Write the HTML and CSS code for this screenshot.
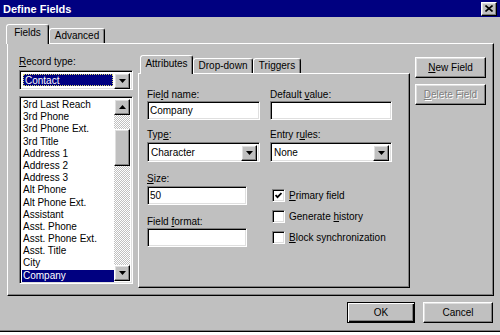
FILE: index.html
```html
<!DOCTYPE html>
<html lang="en">
<head>
  <meta charset="UTF-8">
  <title>Define Fields</title>
  <link rel="stylesheet" href="styles.css">
</head>
<body>

  <div class="window">
    <div class="titlebar">
      <span class="title">Define Fields</span>
      <button class="close raised">
        <svg width="8" height="7" viewBox="0 0 8 7"><path d="M0.5 0.5 L7.5 6.5 M7.5 0.5 L0.5 6.5" stroke="#000" stroke-width="1.6" fill="none"/></svg>
      </button>
    </div>

    <div class="body">
      <div class="tabs outer-tabs">
        <div class="tab active" style="width:43px">Fields</div>
        <div class="tab" style="width:56px">Advanced</div>
      </div>

      <div class="panel outer-panel">
        <!-- record type + field list -->
        <div class="record-col">
          <div class="label"><u>R</u>ecord type:</div>
          <div class="combo sunken">
            <div class="combo-text"><span class="sel">Contact</span></div>
            <span class="drop-btn raised">
              <svg width="7" height="4" viewBox="0 0 7 4"><polygon points="0,0 7,0 3.5,4" fill="#000"/></svg>
            </span>
          </div>
          <div class="listbox sunken">
            <ul class="items">
              <li>3rd Last Reach</li>
              <li>3rd Phone</li>
              <li>3rd Phone Ext.</li>
              <li>3rd Title</li>
              <li>Address 1</li>
              <li>Address 2</li>
              <li>Address 3</li>
              <li>Alt Phone</li>
              <li>Alt Phone Ext.</li>
              <li>Assistant</li>
              <li>Asst. Phone</li>
              <li>Asst. Phone Ext.</li>
              <li>Asst. Title</li>
              <li>City</li>
              <li class="selected">Company</li>
            </ul>
            <div class="scrollbar">
              <span class="sb-btn raised">
                <svg width="7" height="4" viewBox="0 0 7 4"><polygon points="0,4 7,4 3.5,0" fill="#000"/></svg>
              </span>
              <div class="sb-track"><div class="sb-thumb raised"></div></div>
              <span class="sb-btn raised">
                <svg width="7" height="4" viewBox="0 0 7 4"><polygon points="0,0 7,0 3.5,4" fill="#000"/></svg>
              </span>
            </div>
          </div>
        </div>

        <!-- attributes tab control -->
        <div class="inner-tabctl">
          <div class="tabs inner-tabs">
            <div class="tab active" style="width:53px">Attributes</div>
            <div class="tab" style="width:60px">Drop-down</div>
            <div class="tab" style="width:48px">Triggers</div>
          </div>
          <div class="panel inner-panel">
            <div class="col col-left">
              <div class="label">Fie<u>l</u>d name:</div>
              <div class="field sunken">Company</div>
              <div class="label gap">Typ<u>e</u>:</div>
              <div class="select sunken">
                <span class="select-text">Character</span>
                <span class="drop-btn raised">
                  <svg width="7" height="4" viewBox="0 0 7 4"><polygon points="0,0 7,0 3.5,4" fill="#000"/></svg>
                </span>
              </div>
              <div class="label gap2"><u>S</u>ize:</div>
              <div class="field short sunken">50</div>
              <div class="label gap2">Field <u>f</u>ormat:</div>
              <div class="field short sunken"></div>
            </div>
            <div class="col col-right">
              <div class="label">Default <u>v</u>alue:</div>
              <div class="field sunken"></div>
              <div class="label gap">Entry r<u>u</u>les:</div>
              <div class="select sunken">
                <span class="select-text">None</span>
                <span class="drop-btn raised">
                  <svg width="7" height="4" viewBox="0 0 7 4"><polygon points="0,0 7,0 3.5,4" fill="#000"/></svg>
                </span>
              </div>
              <div class="checks">
                <div class="check">
                  <span class="box sunken">
                    <svg width="7" height="7" viewBox="0 0 7 7"><polyline points="0.5,3 2.5,5.2 6.5,1" stroke="#000" stroke-width="1.8" fill="none"/></svg>
                  </span>
                  <span><u>P</u>rimary field</span>
                </div>
                <div class="check">
                  <span class="box sunken"></span>
                  <span>Generate <u>h</u>istory</span>
                </div>
                <div class="check">
                  <span class="box sunken"></span>
                  <span><u>B</u>lock synchronization</span>
                </div>
              </div>
            </div>
          </div>
        </div>

        <div class="side-buttons">
          <button class="btn raised"><u>N</u>ew Field</button>
          <button class="btn raised disabled"><u>D</u>elete Field</button>
        </div>
      </div>

      <div class="footer">
        <button class="btn default ok">OK</button>
        <button class="btn raised cancel">Cancel</button>
      </div>
    </div>
  </div>

</body>
</html>
```

FILE: styles.css
```css
* {
  box-sizing: border-box;
}
body {
  margin: 0;
  background: #fff;
  font-family: "Liberation Sans", Arial, sans-serif;
  font-size: 10px;
  color: #000;
}
.window {
  width: 500px;
  height: 332px;
  background: #c0c0c0;
  border-bottom: 1px solid #000;
  box-shadow: inset 0 -1px #808080;
}
.titlebar {
  height: 17px;
  background: #000080;
  color: #fff;
  display: flex;
  align-items: center;
  justify-content: space-between;
  padding: 0 3px;
}
.title {
  font-weight: bold;
  font-size: 11px;
}
.raised {
  background: #c0c0c0;
  border: 1px solid;
  border-color: #fff #000 #000 #fff;
  box-shadow: inset -1px -1px #808080, inset 1px 1px #dfdfdf;
}
.sunken {
  background: #fff;
  border: 1px solid;
  border-color: #808080 #fff #fff #808080;
  box-shadow: inset 1px 1px #000, inset -1px -1px #dfdfdf;
}
.close {
  width: 16px;
  height: 14px;
  padding: 0;
  display: flex;
  align-items: center;
  justify-content: center;
}
.body {
  padding: 7px 6px 0 7px;
}
.tabs {
  display: flex;
  align-items: flex-end;
  height: 19px;
}
.outer-tabs {
  margin-left: -1px;
}
.inner-tabs {
  height: 18px;
  margin-left: 2px;
}
.tab {
  height: 15px;
  line-height: 13px;
  text-align: center;
  white-space: nowrap;
  border: 1px solid;
  border-bottom: 0;
  border-color: #fff #000 transparent #fff;
  border-radius: 3px 3px 0 0;
  box-shadow: inset -1px 0 #808080;
}
.tab.active {
  height: 20px;
  line-height: 16px;
  margin-bottom: -1px;
  position: relative;
  z-index: 1;
  background: #c0c0c0;
}
.inner-tabs .tab.active {
  height: 19px;
}
.panel {
  border: 1px solid;
  border-color: #fff #000 #000 #fff;
  box-shadow: inset -1px -1px #808080;
}
.outer-panel {
  height: 253px;
  padding: 11px 0 0 11px;
  display: flex;
  align-items: flex-start;
}
.record-col {
  width: 114px;
  margin-right: 5px;
}
.label {
  height: 13px;
  line-height: 13px;
  white-space: nowrap;
}
.combo {
  margin-top: 2px;
  height: 20px;
  display: flex;
  padding: 2px;
}
.combo-text {
  flex: 1;
  display: flex;
  padding: 1px;
}
.sel {
  flex: 1;
  background: #000080;
  color: #fff;
  border: 1px dotted #d8d870;
  line-height: 12px;
  padding-left: 1px;
}
.drop-btn {
  width: 16px;
  height: 16px;
  display: flex;
  align-items: center;
  justify-content: center;
}
.listbox {
  margin-top: 6px;
  height: 188px;
  padding: 2px;
  display: flex;
}
.items {
  flex: 1;
  list-style: none;
  margin: 0;
  padding: 0;
}
.items li {
  height: 12.2px;
  line-height: 12px;
  padding-left: 1px;
  white-space: nowrap;
  overflow: hidden;
}
.items li.selected {
  background: #000080;
  color: #fff;
}
.scrollbar {
  width: 16px;
  display: flex;
  flex-direction: column;
}
.sb-btn {
  height: 16px;
  display: flex;
  align-items: center;
  justify-content: center;
}
.sb-track {
  flex: 1;
  background: repeating-conic-gradient(#fff 0 25%, #c0c0c0 0 50%) 0 0 / 2px 2px;
}
.sb-thumb {
  margin-top: 14px;
  height: 37px;
}
.inner-tabctl {
  width: 272px;
}
.inner-panel {
  height: 215px;
  padding: 14px 0 0 8px;
  display: flex;
  gap: 10px;
}
.col-left {
  width: 113px;
}
.col-right {
  width: 122px;
}
.field {
  height: 19px;
  line-height: 17px;
  padding: 0 2px;
  white-space: nowrap;
}
.field.short {
  width: 100px;
}
.label.gap {
  margin-top: 8px;
}
.label.gap2 {
  margin-top: 10px;
}
.select {
  margin-top: 1px;
  height: 20px;
  display: flex;
  padding: 2px;
}
.select-text {
  flex: 1;
  line-height: 16px;
  padding-left: 1px;
}
.col-left .field.short {
  margin-top: 1px;
}
.col-left .field.short:last-child {
  margin-top: 0;
}
.checks {
  margin-top: 27px;
  display: flex;
  flex-direction: column;
  gap: 8px;
}
.check {
  height: 13px;
  display: flex;
  align-items: center;
  white-space: nowrap;
}
.box {
  width: 13px;
  height: 13px;
  margin: 0 4px 0 2px;
  display: flex;
  align-items: center;
  justify-content: center;
}
.side-buttons {
  width: 71px;
  margin: 2px 0 0 5px;
  display: flex;
  flex-direction: column;
  gap: 6px;
}
.btn {
  height: 21px;
  padding: 0;
  font: inherit;
  color: #000;
}
.btn.disabled {
  color: #808080;
  text-shadow: 1px 1px #fff;
}
.footer {
  display: flex;
  justify-content: flex-end;
  gap: 8px;
  margin-top: 6px;
  padding-right: 1px;
}
.btn.default {
  background: #c0c0c0;
  border: 1px solid #000;
  box-shadow: inset 1px 1px #fff, inset -1px -1px #000, inset -2px -2px #808080;
}
.ok {
  width: 68px;
}
.cancel {
  width: 70px;
}
```
